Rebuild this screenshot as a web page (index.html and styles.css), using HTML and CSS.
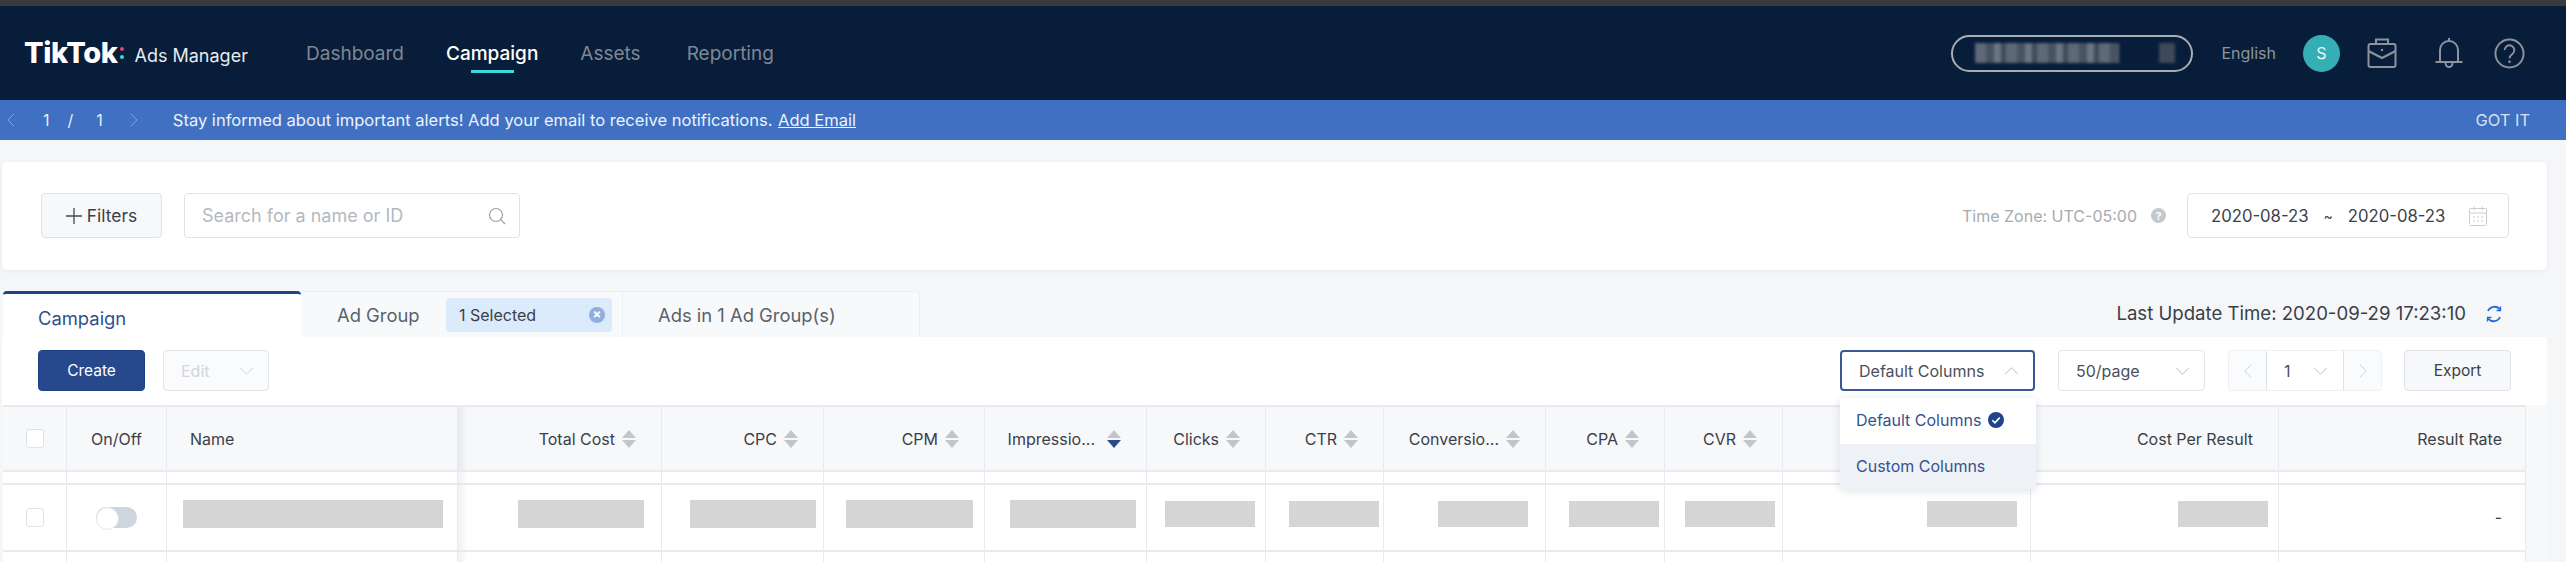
FILE: index.html
```html
<!DOCTYPE html>
<html lang="en">
<head>
<meta charset="utf-8">
<title>TikTok Ads Manager</title>
<link rel="stylesheet" href="styles.css">
</head>
<body>
<svg class="defs" aria-hidden="true">
  <symbol id="chev-down" viewBox="0 0 18 10"><path d="M1 1l8 8 8-8" fill="none" stroke="currentColor" stroke-width="1.2"/></symbol>
  <symbol id="chev-left" viewBox="0 0 10 18"><path d="M9 1L1 9l8 8" fill="none" stroke="currentColor" stroke-width="1.2"/></symbol>
  <symbol id="chev-right" viewBox="0 0 10 18"><path d="M1 1l8 8-8 8" fill="none" stroke="currentColor" stroke-width="1.2"/></symbol>
</svg>
<div class="topstrip"></div>
<header class="nav">
  <div class="brand"><span class="logo">TikTok</span><span class="dots"><i class="dot-red"></i><i class="dot-cyan"></i></span><span class="product">Ads Manager</span></div>
  <nav class="menu">
    <a class="menu-item">Dashboard</a>
    <a class="menu-item active">Campaign</a>
    <a class="menu-item assets">Assets</a>
    <a class="menu-item">Reporting</a>
  </nav>
  <div class="nav-right">
    <div class="account"><span class="mosaic"></span><span class="mosaic small"></span></div>
    <span class="lang">English</span>
    <span class="avatar">S</span>
    <svg class="nav-icon case" viewBox="0 0 30 32" fill="none" stroke="#8d939c" stroke-width="2"><path d="M9 7V2.500h12V7"/><rect x="1.500" y="7" width="27" height="23" rx="2"/><path d="M1.500 14L15 21l13.500-7"/><circle cx="15" cy="13" r="1.200" fill="#8d939c" stroke="none"/></svg>
    <svg class="nav-icon bell" viewBox="0 0 30 32" fill="none" stroke="#8d939c" stroke-width="2"><path d="M6 25V13a9 9 0 0 1 18 0v12"/><path d="M1.500 25h27"/><path d="M11.500 26a3.500 4 0 0 0 7 0"/><path d="M15 1v3"/></svg>
    <svg class="nav-icon help" viewBox="0 0 32 32" fill="none" stroke="#8d939c" stroke-width="2"><circle cx="16" cy="16" r="14.500"/><path d="M11 12.500a5 5 0 1 1 8 4c-2 1.500-3 2.300-3 4.500"/><circle cx="16" cy="24.500" r="1.400" fill="#8d939c" stroke="none"/></svg>
  </div>
</header>
<div class="banner">
  <svg class="ban-arrow first"><use href="#chev-left"/></svg>
  <span class="pager-text">1</span><span class="pager-text slash">/</span><span class="pager-text last-num">1</span>
  <svg class="ban-arrow second"><use href="#chev-right"/></svg>
  <span class="ban-msg">Stay informed about important alerts! Add your email to receive notifications. <a class="ban-link">Add Email</a></span>
  <span class="gotit">GOT IT</span>
</div>
<main class="page">
  <section class="filter-card">
    <button class="btn filters"><svg class="plus" viewBox="0 0 16 16"><path d="M8 0v16M0 8h16" stroke="#444b55" stroke-width="1.300"/></svg>Filters</button>
    <div class="search"><span>Search for a name or ID</span><svg class="search-icon" viewBox="0 0 18 18" fill="none" stroke="#9aa0a8" stroke-width="1.200"><circle cx="8" cy="8" r="6.500"/><path d="M12.700 12.700L17 17"/></svg></div>
    <span class="spacer"></span>
    <span class="tz">Time Zone: UTC-05:00</span>
    <span class="tz-help">?</span>
    <div class="dates"><span>2020-08-23</span><span class="tilde">~</span><span>2020-08-23</span><svg class="cal" viewBox="0 0 18 20" fill="none" stroke="#c9ced5" stroke-width="1"><rect x="0.500" y="2.500" width="17" height="17" rx="1"/><path d="M0.500 7h17M5 0.500v4M13 0.500v4M4 11h2M8 11h2M12 11h2M4 15h2M8 15h2M12 15h2"/></svg></div>
  </section>
  <div class="tabbar">
    <div class="tab tab-active">Campaign</div>
    <div class="tab tab-group"><span class="tab-label">Ad Group</span><span class="chip">1 Selected<span class="chip-x">×</span></span></div>
    <div class="tab tab-ads">Ads in 1 Ad Group(s)</div>
    <span class="spacer"></span>
    <span class="updated">Last Update Time: 2020-09-29 17:23:10</span>
    <svg class="refresh" viewBox="0 0 18 18" fill="none" stroke="#2369d8" stroke-width="1.800"><path d="M3 6a7 7 0 0 1 12-1.500"/><path d="M15 12a7 7 0 0 1-12 1.500"/><path d="M15.500 1.500v4h-4M2.500 16.500v-4h4" stroke-width="1.300"/></svg>
  </div>
  <section class="panel">
    <div class="toolbar">
      <button class="btn create">Create</button>
      <div class="select edit">Edit<svg class="chev"><use href="#chev-down"/></svg></div>
      <span class="spacer"></span>
      <div class="columns-wrap">
        <div class="select columns">Default Columns<svg class="chev up"><use href="#chev-down"/></svg></div>
        <div class="dropdown">
          <div class="dd-item">Default Columns<svg class="dd-check" viewBox="0 0 16 16"><circle cx="8" cy="8" r="8" fill="#1f4289"/><path d="M4.300 8.200l2.600 2.600 4.800-5.200" fill="none" stroke="#fff" stroke-width="1.600"/></svg></div>
          <div class="dd-item hover">Custom Columns</div>
        </div>
      </div>
      <div class="select perpage">50/page<svg class="chev"><use href="#chev-down"/></svg></div>
      <div class="pager">
        <span class="pg-side"><svg class="pg-arrow"><use href="#chev-left"/></svg></span>
        <span class="pg-num">1<svg class="chev"><use href="#chev-down"/></svg></span>
        <span class="pg-side"><svg class="pg-arrow"><use href="#chev-right"/></svg></span>
      </div>
      <button class="btn export">Export</button>
    </div>
    <div class="table">
      <div class="row head">
        <div class="cell center"><span class="check"></span></div>
        <div class="cell center">On/Off</div>
        <div class="cell left name-col">Name</div>
        <div class="cell fixed-edge">Total Cost<span class="sort"></span></div>
        <div class="cell">CPC<span class="sort"></span></div>
        <div class="cell">CPM<span class="sort"></span></div>
        <div class="cell">Impressio...<span class="sort wide desc"></span></div>
        <div class="cell">Clicks<span class="sort"></span></div>
        <div class="cell">CTR<span class="sort"></span></div>
        <div class="cell">Conversio...<span class="sort"></span></div>
        <div class="cell">CPA<span class="sort"></span></div>
        <div class="cell">CVR<span class="sort"></span></div>
        <div class="cell">Result</div>
        <div class="cell">Cost Per Result</div>
        <div class="cell last">Result Rate</div>
      </div>
      <div class="row gap">
        <div class="cell"></div><div class="cell"></div><div class="cell"></div><div class="cell fixed-edge"></div><div class="cell"></div><div class="cell"></div><div class="cell"></div><div class="cell"></div><div class="cell"></div><div class="cell"></div><div class="cell"></div><div class="cell"></div><div class="cell"></div><div class="cell"></div><div class="cell last"></div>
      </div>
      <div class="row data">
        <div class="cell center"><span class="check"></span></div>
        <div class="cell center"><span class="toggle"></span></div>
        <div class="cell"><span class="ph name-ph"></span></div>
        <div class="cell fixed-edge"><span class="ph p-total"></span></div>
        <div class="cell"><span class="ph p-total p-cpc"></span></div>
        <div class="cell"><span class="ph p-total p-cpm"></span></div>
        <div class="cell"><span class="ph p-total p-imp"></span></div>
        <div class="cell"><span class="ph p-sm p-clk"></span></div>
        <div class="cell"><span class="ph p-sm p-ctr"></span></div>
        <div class="cell"><span class="ph p-sm p-conv"></span></div>
        <div class="cell"><span class="ph p-sm p-cpa"></span></div>
        <div class="cell"><span class="ph p-sm p-cvr"></span></div>
        <div class="cell"><span class="ph p-sm p-res"></span></div>
        <div class="cell"><span class="ph p-sm p-res p-cost"></span></div>
        <div class="cell last dash">-</div>
      </div>
      <div class="row tail">
        <div class="cell"></div><div class="cell"></div><div class="cell"></div><div class="cell fixed-edge"></div><div class="cell"></div><div class="cell"></div><div class="cell"></div><div class="cell"></div><div class="cell"></div><div class="cell"></div><div class="cell"></div><div class="cell"></div><div class="cell"></div><div class="cell"></div><div class="cell last"></div>
      </div>
    </div>
  </section>
</main>
</body>
</html>
```

FILE: styles.css
```css
* { box-sizing: border-box; }
html, body { margin: 0; height: 562px; overflow: hidden; }
body { font-family: Inter, "Liberation Sans", sans-serif; font-size: 16px; color: #3a4049; background: #f4f6f8; }
.defs { position: absolute; width: 0; height: 0; }
button { font: inherit; }
.spacer { flex: 1; }

.topstrip { height: 6px; background: #3a3a3c; }
.nav { height: 94px; background: #071d3a; display: flex; align-items: center; padding: 0 41px 0 25px; }
.brand { display: flex; align-items: center; width: 281px; flex: none; }
.logo { font-size: 29px; font-weight: 800; color: #fff; letter-spacing: -0.4px; position: relative; top: -1px; margin-left: -1px; }
.dots { display: flex; flex-direction: column; gap: 4px; margin: 0 11px 0 2px; }
.dots i { display: block; width: 4px; height: 4px; border-radius: 50%; }
.dot-red { background: #e8456b; }
.dot-cyan { background: #3fd6d8; }
.product { font-size: 18px; color: #e8ebef; position: relative; top: 2px; }
.menu { display: flex; gap: 42px; padding-top: 2px; }
.menu-item { position: relative; font-size: 19px; color: #7f8791; line-height: 28px; }
.menu-item.assets { margin-right: 4px; }
.menu-item.active { color: #fff; font-weight: 500; }
.menu-item.active::after { content: ""; position: absolute; left: 25px; right: 24px; bottom: -5px; height: 3px; background: #3fd8dc; }
.nav-right { margin-left: auto; display: flex; align-items: center; }
.account { width: 242px; height: 37px; border: 2px solid #a9adb3; border-radius: 19px; display: flex; align-items: center; padding-left: 22px; margin-right: 28px; }
.mosaic { width: 144px; height: 20px; background: repeating-linear-gradient(90deg, #5f6976 0 11px, #48535f 11px 19px, #6c7581 19px 26px, #3f4a58 26px 31px); filter: blur(1.5px); }
.mosaic.small { width: 16px; height: 20px; margin-left: 40px; background: #3f4a58; }
.lang { font-size: 16px; color: #8f959d; margin-right: 27px; }
.avatar { width: 37px; height: 37px; border-radius: 50%; background: #35aeb6; color: #e9f6f7; display: flex; align-items: center; justify-content: center; font-size: 16px; margin-right: 27px; }
.nav-icon { display: block; width: 30px; height: 32px; }
.case { margin-right: 37px; }
.bell { margin-right: 30px; }
.help { width: 31px; height: 31px; }

.banner { height: 40px; background: #3f70c2; color: #e7edf7; display: flex; align-items: center; font-size: 16px; padding: 0 36px 0 7px; }
.ban-arrow { width: 8px; height: 14px; color: #8faadc; }
.pager-text { margin-left: 28px; }
.pager-text.slash { margin-left: 18px; margin-right: -5px; }
.pager-text.last-num { margin-right: -3px; }
.ban-arrow.second { margin-left: 30px; }
.ban-msg { margin-left: 35px; font-size: 16.55px; color: #edf2fa; }
.ban-link { text-decoration: underline; margin-left: 1px; }
.gotit { margin-left: auto; font-size: 16.4px; color: #d6e0f2; }

.page { padding: 22px 19px 0 2px; }
.filter-card { height: 108px; background: #fff; border-radius: 5px; display: flex; align-items: center; padding: 0 38px 1px 39px; box-shadow: 0 1px 4px rgba(30,50,80,.06); }
.btn { border: 1px solid #dfe3e9; background: #f7f8fa; border-radius: 4px; color: #3a4049; padding: 0; display: flex; align-items: center; justify-content: center; }
.filters { width: 121px; height: 45px; gap: 5px; font-size: 17.4px; }
.plus { width: 16px; height: 16px; }
.search { width: 336px; height: 45px; margin-left: 22px; border: 1px solid #dfe3e9; border-radius: 4px; display: flex; align-items: center; justify-content: space-between; padding: 0 13px 0 17px; color: #b4b9c0; font-size: 18px; }
.search-icon { width: 18px; height: 18px; }
.tz { color: #a6abb2; font-size: 16px; }
.tz-help { width: 15px; height: 15px; margin: 0 21px 0 14px; border-radius: 50%; background: #c4c8cd; color: #fff; font-size: 11px; font-weight: 700; display: flex; align-items: center; justify-content: center; }
.dates { width: 322px; height: 45px; border: 1px solid #dfe3e9; border-radius: 4px; display: flex; align-items: center; padding-left: 23px; font-size: 16.7px; color: #3a4049; }
.tilde { margin: 0 15px; font-size: 14px; }
.cal { width: 18px; height: 20px; margin-left: 24px; flex: none; }

.tabbar { height: 46px; margin-top: 21px; display: flex; align-items: flex-start; }
.tab { height: 46px; display: flex; align-items: center; font-size: 18.4px; color: #5b626c; background: #f7f9fb; border-top: 1px solid #eceff3; flex: none; }
.tab-active { width: 298px; margin-left: 1px; padding: 4px 0 0 35px; background: #fff; border-top: 3px solid #1f4289; border-radius: 4px 4px 0 0; color: #2f4f92; }
.tab-group { width: 322px; padding-left: 36px; border-right: 1px solid #eceff3; }
.tab-label { width: 109px; flex: none; }
.chip { width: 166px; height: 34px; padding: 0 7px 0 13px; background: #dcebfb; border-radius: 4px; display: flex; align-items: center; justify-content: space-between; font-size: 16px; color: #3a4049; }
.chip-x { width: 16px; height: 16px; border-radius: 50%; background: #8fb0de; color: #fff; font-size: 13px; line-height: 15px; text-align: center; font-weight: 700; }
.tab-ads { width: 297px; padding-left: 35px; border-radius: 0 4px 0 0; border-right: 1px solid #eceff3; }
.updated { font-size: 18.6px; color: #3a4049; line-height: 46px; height: 46px; margin-top: -1px; }
.refresh { width: 18px; height: 18px; margin: 14px 44px 0 19px; }

.panel { background: #f6f8fa; }
.toolbar { height: 68px; display: flex; align-items: flex-start; padding: 13px 36px 0 36px; background: #fff; }
.create { width: 107px; height: 41px; background: #28488d; border-color: #1f3f84; color: #fff; font-size: 15.5px; }
.select { height: 41px; border: 1px solid #e1e5ea; border-radius: 4px; display: flex; align-items: center; justify-content: space-between; background: #fff; font-size: 16px; color: #4a5059; padding: 0 14px 0 17px; }
.chev { width: 15px; height: 8px; color: #b6bbc2; flex: none; }
.chev.up { transform: rotate(180deg); }
.edit { width: 106px; margin-left: 18px; background: #fafbfc; color: #d3d6da; }
.edit .chev { color: #ccd0d5; }
.columns-wrap { position: relative; margin-right: 23px; }
.columns { width: 195px; border: 2px solid #3a5796; }
.dropdown { position: absolute; z-index: 5; left: 0; top: 48px; width: 196px; background: #fff; border-radius: 4px; box-shadow: 0 2px 10px rgba(30,50,80,.14); color: #36528f; font-size: 16px; }
.dd-item { height: 46px; display: flex; align-items: center; padding: 0 0 2px 16px; gap: 7px; }
.dd-item.hover { background: #eef1f5; height: 45px; border-radius: 0 0 4px 4px; }
.dd-check { width: 16px; height: 16px; }
.perpage { width: 147px; margin-right: 23px; padding-left: 17px; }
.pager { width: 154px; height: 41px; display: flex; border: 1px solid #eef0f3; border-radius: 4px; background: #fafbfc; font-size: 16px; }
.pg-side { width: 37px; display: flex; align-items: center; justify-content: center; }
.pg-arrow { width: 8px; height: 14px; color: #ccd0d5; }
.pg-num { flex: 1; background: #fff; border: 1px solid #dfe3e9; border-width: 0 1px; display: flex; align-items: center; justify-content: space-between; padding: 0 15px 0 17px; color: #4a5059; }
.export { width: 107px; height: 41px; margin-left: 22px; font-size: 15.5px; }

.table { width: 2523px; margin-left: 1px; background: #fff; border-top: 2px solid #e7ebf0; position: relative; }
.row { display: grid; grid-template-columns: 64px 100px 291px 204px 162px 161px 162px 119px 118px 162px 119px 118px 248px 248px 247px; border-bottom: 2px solid #e7ebf0; }
.cell { display: flex; align-items: center; justify-content: flex-end; padding-right: 25px; border-right: 1px solid #e7ebf0; font-size: 16px; color: #3a4049; min-width: 0; }
.cell.last { padding-right: 23px; border-right: 1px solid #e7ebf0; }
.cell.center { justify-content: center; padding-right: 0; }
.cell.left { justify-content: flex-start; padding: 0 0 0 23px; }
.head { height: 65px; background: #f7f8fa; }
.gap { height: 13px; background: #fff; }
.data { height: 67px; background: #fff; }
.tail { height: 10px; border-bottom: 0; background: #fff; }
.fixed-edge { position: relative; }
.fixed-edge::before { content: ""; position: absolute; left: 0; top: 0; bottom: 0; width: 10px; background: linear-gradient(90deg, rgba(40,50,70,.07), rgba(40,50,70,0)); }
.check { width: 18px; height: 19px; background: #fff; border: 1px solid #dfe3e9; border-radius: 3px; }
.sort { width: 14px; height: 20px; margin-left: 7px; flex: none; display: flex; flex-direction: column; justify-content: center; gap: 2px; }
.sort::before, .sort::after { content: ""; width: 0; height: 0; border-left: 7px solid transparent; border-right: 7px solid transparent; }
.sort::before { border-bottom: 8px solid #c2c5c9; }
.sort::after { border-top: 8px solid #c2c5c9; }
.sort.wide { margin-left: 12px; }
.sort.desc::after { border-top-color: #2a4a8c; }
.toggle { width: 41px; height: 21px; border-radius: 11px; background: #cdd5de; position: relative; }
.toggle::before { content: ""; position: absolute; left: 0; top: 0; width: 21px; height: 21px; border-radius: 50%; background: #fff; border: 1px solid #dfe3e9; }
.ph { display: block; background: #d5d5d5; position: relative; top: -4px; }
.name-ph { width: 260px; height: 28px; margin-right: -11px; }
.p-total { width: 126px; height: 28px; margin-right: -8px; }
.p-total.p-cpc { margin-right: -18px; }
.p-total.p-cpm { width: 127px; margin-right: -14px; }
.p-total.p-imp { margin-right: -15px; }
.p-sm { width: 90px; height: 26px; }
.p-clk { margin-right: -15px; }
.p-ctr { margin-right: -21px; }
.p-conv { margin-right: -8px; }
.p-cpa { margin-right: -20px; }
.p-cvr { margin-right: -18px; }
.p-res { margin-right: -12px; }
.p-res.p-cost { margin-right: -15px; }
.dash { position: relative; top: -1px; }
```
